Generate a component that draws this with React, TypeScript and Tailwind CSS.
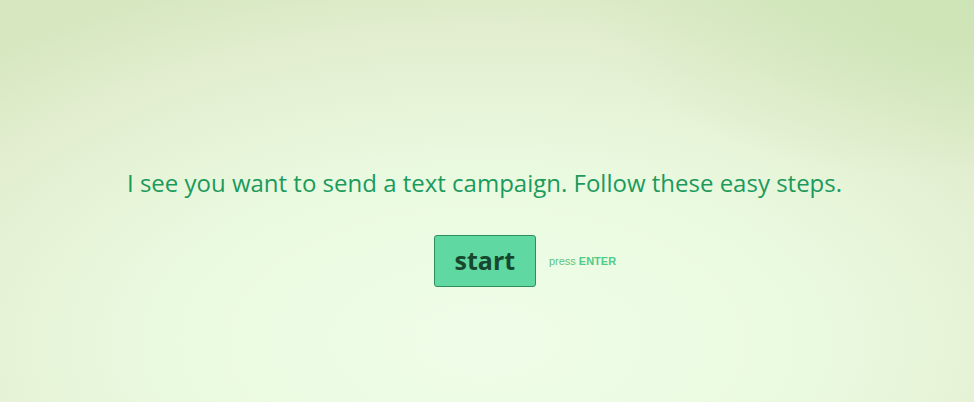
export default function App() {
  return (
    <div className="h-[402px] w-full overflow-hidden bg-[radial-gradient(ellipse_75%_95%_at_50%_85%,#effde8_0%,#eafae0_45%,#e3eed0_80%,#d7e8c1_100%)] font-['Open_Sans',sans-serif]">
      <div className="relative h-full w-full bg-[radial-gradient(ellipse_40%_45%_at_100%_0%,#cde4b6_0%,rgba(205,228,182,0)_100%)]">
        <div className="flex flex-col items-center pt-[166px]">
          <h1 className="mr-[5px] text-[24px] leading-[34px] text-[#1b9a5c]">
            I see you want to send a text campaign. Follow these easy steps.
          </h1>
          <div className="mt-[35px] flex items-center">
            <div className="w-[76px]" />
            <button className="flex h-[52px] w-[102px] items-center justify-center rounded-[3px] border border-[#2f8e5d] bg-[#5fd9a1] text-[25px] font-bold text-[#17482f]">
              start
            </button>
            <span className="ml-[13px] font-['Liberation_Sans',sans-serif] text-[11px] text-[#62c27e]">
              press <b className="font-bold text-[#4fcc88]">ENTER</b>
            </span>
          </div>
        </div>
      </div>
    </div>
  );
}
